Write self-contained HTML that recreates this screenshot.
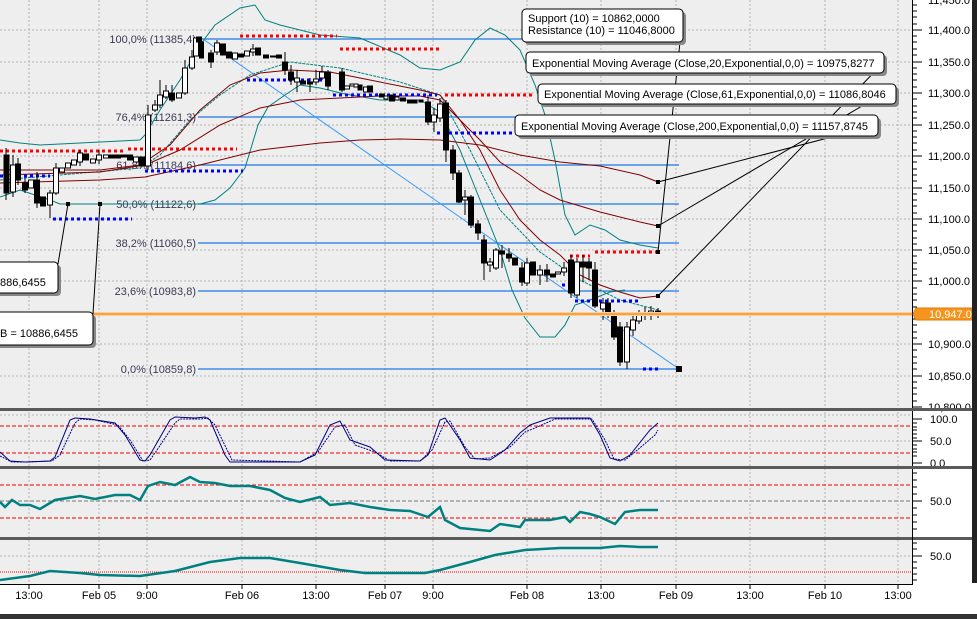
<!DOCTYPE html>
<html><head><meta charset="utf-8"><style>
html,body{margin:0;padding:0;background:#fff;}
svg{display:block;font-family:"Liberation Sans",sans-serif;}
</style></head><body>
<svg width="977" height="619" viewBox="0 0 977 619" xmlns="http://www.w3.org/2000/svg">
<rect x="0" y="0" width="977" height="619" fill="#fff"/>
<rect x="0" y="0" width="912" height="584" fill="#eeeeee"/>
<!-- horizontal grid main -->
<g stroke="#b4b4b4" stroke-dasharray="2 2" stroke-width="1">
<line x1="0" y1="30" x2="912" y2="30"/><line x1="0" y1="62" x2="912" y2="62"/><line x1="0" y1="93" x2="912" y2="93"/>
<line x1="0" y1="125" x2="912" y2="125"/><line x1="0" y1="156" x2="912" y2="156"/><line x1="0" y1="188" x2="912" y2="188"/>
<line x1="0" y1="219" x2="912" y2="219"/><line x1="0" y1="250" x2="912" y2="250"/><line x1="0" y1="281" x2="912" y2="281"/>
<line x1="0" y1="313" x2="912" y2="313"/><line x1="0" y1="344" x2="912" y2="344"/><line x1="0" y1="376" x2="912" y2="376"/>
<line x1="0" y1="415" x2="912" y2="415"/><line x1="0" y1="441" x2="912" y2="441"/>
<line x1="0" y1="556" x2="912" y2="556"/>
<line x1="29" y1="0" x2="29" y2="584"/><line x1="99" y1="0" x2="99" y2="584"/><line x1="147" y1="0" x2="147" y2="584"/>
<line x1="242" y1="0" x2="242" y2="584"/><line x1="316" y1="0" x2="316" y2="584"/><line x1="385" y1="0" x2="385" y2="584"/>
<line x1="433" y1="0" x2="433" y2="584"/><line x1="527" y1="0" x2="527" y2="584"/><line x1="601" y1="0" x2="601" y2="584"/>
<line x1="676" y1="0" x2="676" y2="584"/><line x1="750" y1="0" x2="750" y2="584"/><line x1="825" y1="0" x2="825" y2="584"/>
<line x1="898" y1="0" x2="898" y2="584"/>
</g>
<g stroke="#777" stroke-dasharray="4 2"><line x1="0" y1="501" x2="912" y2="501"/></g>
<g stroke="#e00" stroke-dasharray="4 2" stroke-width="1">
<line x1="0" y1="426" x2="912" y2="426"/><line x1="0" y1="453" x2="912" y2="453"/>
<line x1="0" y1="485" x2="912" y2="485"/><line x1="0" y1="518" x2="912" y2="518"/>
</g>
<g stroke="#e00" stroke-dasharray="1 1"><line x1="0" y1="572" x2="912" y2="572"/></g>

<!-- fib lines -->
<g stroke="#1e78e6" stroke-width="1.2">
<line x1="198" y1="39" x2="679" y2="39"/><line x1="198" y1="117" x2="679" y2="117"/>
<line x1="198" y1="165" x2="679" y2="165"/><line x1="198" y1="204" x2="679" y2="204"/>
<line x1="198" y1="243" x2="679" y2="243"/><line x1="198" y1="291" x2="679" y2="291"/>
<line x1="198" y1="369" x2="679" y2="369"/>
</g>
<g font-size="11" fill="#3a3a55" text-anchor="end">
<text x="196" y="43">100,0% (11385,4)</text><text x="196" y="121">76,4% (11261,3)</text>
<text x="196" y="169">61,8% (11184,6)</text><text x="196" y="208">50,0% (11122,6)</text>
<text x="196" y="247">38,2% (11060,5)</text><text x="196" y="295">23,6% (10983,8)</text>
<text x="196" y="373">0,0% (10859,8)</text>
</g>
<line x1="200" y1="37" x2="679" y2="369" stroke="#3399ff" stroke-width="1"/>

<!-- bollinger -->
<g fill="none" stroke="#008080" stroke-width="1">
<polyline points="0,140 20,143 40,145 140,140 145,135 160,110 180,80 200,45 215,25 240,8 255,5 265,20 280,25 320,35 360,38 400,55 420,68 440,70 460,62 475,40 490,28 505,35 520,50 535,85 545,115 555,160 565,215 575,235 590,225 605,230 620,240 640,245 658,248"/>
<polyline points="0,197 20,190 50,200 60,204 140,204 200,204 215,200 230,188 245,168 258,125 268,107 285,95 300,85 320,88 345,94 380,100 420,100 440,112 460,150 480,200 500,250 512,290 525,318 540,337 555,337 565,325 575,305 590,300 610,292 625,290"/>
<polyline stroke-dasharray="3 1" points="0,180 60,175 140,168 160,155 190,120 220,95 250,75 290,62 340,68 400,82 440,95 470,150 500,210 540,252 580,280 620,300 658,310"/>
</g>
<!-- EMAs -->
<g fill="none" stroke="#800000" stroke-width="1">
<polyline points="0,170 100,170 140,165 170,145 200,110 230,85 260,73 290,70 330,72 380,82 420,90 440,95 460,120 480,150 500,190 520,220 540,240 560,255 580,275 600,285 620,292 640,298 658,296"/>
<polyline points="0,175 100,172 145,165 180,150 220,125 260,108 300,100 340,98 380,96 420,96 440,100 460,120 480,140 500,162 520,175 540,190 560,200 600,212 640,222 658,226"/>
<polyline points="0,183 100,180 145,177 200,165 260,150 320,143 360,140 400,139 440,140 480,145 520,155 560,162 600,166 640,175 658,182"/>
</g>

<!-- dotted support/resistance -->
<g stroke="#ff0000" stroke-width="3" stroke-dasharray="3 3" fill="none">
<line x1="0" y1="151" x2="125" y2="151"/><line x1="128" y1="149" x2="237" y2="149"/>
<line x1="240" y1="36" x2="337" y2="36"/><line x1="340" y1="49" x2="440" y2="49"/>
<line x1="445" y1="95" x2="535" y2="95"/><line x1="570" y1="256" x2="590" y2="256"/>
<line x1="595" y1="252" x2="658" y2="252"/>
</g>
<g stroke="#0000ff" stroke-width="3" stroke-dasharray="3 3" fill="none">
<line x1="0" y1="176" x2="50" y2="176"/><line x1="53" y1="219" x2="132" y2="219"/>
<line x1="145" y1="171" x2="243" y2="171"/><line x1="247" y1="80" x2="322" y2="80"/>
<line x1="333" y1="95" x2="437" y2="95"/><line x1="437" y1="133" x2="517" y2="133"/>
<line x1="562" y1="285" x2="572" y2="285"/><line x1="575" y1="301" x2="640" y2="301"/>
<line x1="643" y1="369" x2="660" y2="369"/>
</g>

<!-- candles -->
<g stroke="#000" stroke-width="1">
<line x1="6" y1="148" x2="6" y2="200"/><rect x="4" y="155" width="5" height="38" fill="#000"/>
<line x1="13" y1="155" x2="13" y2="197"/><rect x="10.5" y="165" width="5" height="27" fill="#fff"/>
<line x1="18" y1="158" x2="18" y2="185"/><rect x="15.5" y="164" width="5" height="16" fill="#000"/>
<line x1="25" y1="178" x2="25" y2="193"/><rect x="22.5" y="183" width="5" height="7" fill="#000"/>
<rect x="28.5" y="180" width="5" height="8" fill="#fff"/>
<line x1="37" y1="172" x2="37" y2="208"/><rect x="34.5" y="180" width="5" height="23" fill="#000"/>
<rect x="40.5" y="197" width="5" height="9" fill="#000"/>
<line x1="50" y1="190" x2="50" y2="218"/><rect x="47.5" y="193" width="5" height="12" fill="#fff"/>
<line x1="56" y1="163" x2="56" y2="195"/><rect x="53.5" y="168" width="5" height="25" fill="#fff"/>
<rect x="59.5" y="168" width="5" height="4" fill="#fff"/><rect x="65.5" y="163" width="5" height="5" fill="#fff"/>
<rect x="71.5" y="160" width="5" height="5" fill="#fff"/><line x1="80" y1="150" x2="80" y2="166"/><rect x="77.5" y="153" width="5" height="9" fill="#fff"/>
<rect x="83.5" y="154" width="5" height="6" fill="#000"/><rect x="90.5" y="159" width="5" height="4" fill="#fff"/>
<line x1="99" y1="150" x2="99" y2="164"/><rect x="96.5" y="155" width="5" height="5" fill="#fff"/>
<rect x="103.5" y="155" width="5" height="3" fill="#fff"/><rect x="109.5" y="155" width="5" height="3" fill="#000"/>
<rect x="115.5" y="155" width="5" height="3" fill="#000"/><rect x="121.5" y="155" width="5" height="2" fill="#000"/>
<rect x="127.5" y="155" width="5" height="5" fill="#000"/><rect x="133.5" y="157" width="5" height="5" fill="#fff"/>
<rect x="139.5" y="157" width="5" height="9" fill="#000"/>
<line x1="148" y1="105" x2="148" y2="170"/><rect x="145.5" y="115" width="5" height="51" fill="#fff"/>
<line x1="155" y1="100" x2="155" y2="112"/><rect x="152.5" y="105" width="5" height="5" fill="#fff"/>
<line x1="160" y1="80" x2="160" y2="108"/><rect x="157.5" y="95" width="5" height="10" fill="#fff"/>
<line x1="166" y1="85" x2="166" y2="99"/><rect x="163.5" y="91" width="5" height="6" fill="#fff"/>
<line x1="172" y1="85" x2="172" y2="102"/><rect x="169.5" y="93" width="5" height="7" fill="#000"/>
<rect x="176.5" y="93" width="5" height="5" fill="#fff"/>
<line x1="185" y1="60" x2="185" y2="95"/><rect x="182.5" y="68" width="5" height="25" fill="#fff"/>
<line x1="192" y1="50" x2="192" y2="70"/><rect x="189.5" y="57" width="5" height="11" fill="#fff"/>
<rect x="193.5" y="38" width="5" height="18" fill="#fff"/><rect x="196.5" y="37" width="5" height="5" fill="#000"/>
<rect x="199.5" y="42" width="4" height="16" fill="#000"/>
<line x1="211" y1="50" x2="211" y2="68"/><rect x="208.5" y="53" width="5" height="9" fill="#000"/>
<line x1="217" y1="40" x2="217" y2="55"/><rect x="214.5" y="43" width="5" height="9" fill="#fff"/>
<rect x="220.5" y="44" width="5" height="11" fill="#000"/><rect x="226.5" y="52" width="5" height="6" fill="#000"/>
<rect x="232.5" y="53" width="5" height="6" fill="#fff"/><rect x="238.5" y="54" width="5" height="3" fill="#000"/>
<rect x="244.5" y="51" width="5" height="5" fill="#fff"/><line x1="253" y1="44" x2="253" y2="56"/><rect x="250.5" y="49" width="5" height="3" fill="#fff"/>
<rect x="255.5" y="48" width="5" height="7" fill="#000"/><rect x="263.5" y="55" width="5" height="3" fill="#000"/>
<rect x="270.5" y="56" width="5" height="1" fill="#000"/><rect x="276.5" y="55" width="5" height="3" fill="#000"/>
<line x1="285" y1="52" x2="285" y2="75"/><rect x="282.5" y="62" width="5" height="8" fill="#000"/>
<line x1="291" y1="65" x2="291" y2="85"/><rect x="288.5" y="72" width="5" height="8" fill="#000"/>
<line x1="297" y1="70" x2="297" y2="92"/><rect x="294.5" y="78" width="5" height="4" fill="#fff"/>
<rect x="300.5" y="81" width="5" height="3" fill="#000"/><line x1="310" y1="78" x2="310" y2="92"/><rect x="307.5" y="82" width="5" height="2" fill="#000"/>
<line x1="316" y1="70" x2="316" y2="85"/><rect x="313.5" y="79" width="5" height="3" fill="#fff"/>
<line x1="322" y1="66" x2="322" y2="80"/><rect x="319.5" y="72" width="5" height="6" fill="#fff"/>
<line x1="328" y1="70" x2="328" y2="90"/><rect x="325.5" y="72" width="5" height="14" fill="#000"/>
<line x1="342" y1="68" x2="342" y2="92"/><rect x="339.5" y="72" width="5" height="18" fill="#000"/>
<rect x="344.5" y="86" width="5" height="3" fill="#fff"/><rect x="350" y="84" width="4" height="2" fill="#fff"/>
<rect x="354" y="84" width="4" height="3" fill="#fff"/><rect x="358" y="85" width="4" height="5" fill="#000"/>
<rect x="363.5" y="87" width="5" height="5" fill="#fff"/><rect x="367.5" y="86" width="5" height="6" fill="#000"/>
<rect x="379.5" y="94" width="5" height="3" fill="#000"/><rect x="384" y="96" width="4" height="3" fill="#fff"/>
<rect x="389.5" y="95" width="5" height="6" fill="#000"/><rect x="395" y="97" width="4" height="3" fill="#fff"/>
<rect x="400.5" y="98" width="5" height="3" fill="#000"/><rect x="407.5" y="100" width="5" height="3" fill="#000"/>
<rect x="413" y="100" width="4" height="3" fill="#000"/><rect x="419" y="100" width="4" height="2" fill="#000"/>
<line x1="428" y1="95" x2="428" y2="125"/><rect x="425.5" y="102" width="5" height="20" fill="#000"/>
<line x1="434" y1="108" x2="434" y2="132"/><rect x="431.5" y="115" width="5" height="7" fill="#fff"/>
<line x1="440" y1="98" x2="440" y2="122"/><rect x="437.5" y="104" width="5" height="14" fill="#fff"/>
<line x1="446" y1="100" x2="446" y2="162"/><rect x="443.5" y="103" width="5" height="47" fill="#000"/>
<line x1="453" y1="145" x2="453" y2="180"/><rect x="450.5" y="150" width="5" height="23" fill="#000"/>
<line x1="459" y1="170" x2="459" y2="203"/><rect x="456.5" y="173" width="5" height="29" fill="#000"/>
<line x1="465" y1="190" x2="465" y2="215"/><rect x="462.5" y="197" width="5" height="3" fill="#fff"/>
<line x1="471" y1="195" x2="471" y2="228"/><rect x="468.5" y="197" width="5" height="28" fill="#000"/>
<line x1="478" y1="220" x2="478" y2="240"/><rect x="475.5" y="224" width="5" height="9" fill="#000"/>
<line x1="484" y1="235" x2="484" y2="280"/><rect x="481.5" y="240" width="5" height="23" fill="#000"/>
<line x1="490" y1="258" x2="490" y2="272"/><rect x="487.5" y="262" width="5" height="3" fill="#fff"/>
<line x1="496" y1="248" x2="496" y2="270"/><rect x="493.5" y="250" width="5" height="18" fill="#fff"/>
<line x1="502" y1="245" x2="502" y2="268"/><rect x="499.5" y="251" width="5" height="3" fill="#000"/>
<line x1="509" y1="248" x2="509" y2="262"/><rect x="506.5" y="254" width="5" height="4" fill="#000"/>
<rect x="512.5" y="258" width="5" height="7" fill="#000"/>
<line x1="522" y1="262" x2="522" y2="286"/><rect x="519.5" y="268" width="5" height="14" fill="#000"/>
<line x1="527" y1="258" x2="527" y2="286"/><rect x="524.5" y="263" width="5" height="20" fill="#fff"/>
<rect x="530.5" y="262" width="5" height="13" fill="#000"/>
<line x1="540" y1="265" x2="540" y2="285"/><rect x="537.5" y="270" width="5" height="5" fill="#fff"/>
<line x1="547" y1="264" x2="547" y2="282"/><rect x="544.5" y="270" width="5" height="5" fill="#000"/>
<rect x="550.5" y="274" width="5" height="3" fill="#000"/><rect x="555.5" y="272" width="5" height="2" fill="#fff"/>
<line x1="564" y1="262" x2="564" y2="276"/><rect x="561.5" y="268" width="5" height="4" fill="#fff"/>
<line x1="571" y1="255" x2="571" y2="298"/><rect x="568.5" y="260" width="5" height="33" fill="#000"/>
<line x1="577" y1="258" x2="577" y2="298"/><rect x="574.5" y="262" width="5" height="33" fill="#fff"/>
<line x1="583" y1="255" x2="583" y2="282"/><rect x="580.5" y="262" width="5" height="5" fill="#000"/>
<line x1="589" y1="258" x2="589" y2="280"/><rect x="586.5" y="262" width="5" height="6" fill="#000"/>
<line x1="595" y1="262" x2="595" y2="308"/><rect x="592.5" y="270" width="5" height="36" fill="#000"/>
<line x1="603" y1="298" x2="603" y2="320"/><rect x="600.5" y="303" width="5" height="6" fill="#fff"/>
<line x1="608" y1="298" x2="608" y2="318"/><rect x="605.5" y="303" width="5" height="10" fill="#000"/>
<line x1="614" y1="310" x2="614" y2="340"/><rect x="611.5" y="313" width="5" height="24" fill="#000"/>
<line x1="620" y1="322" x2="620" y2="366"/><rect x="617.5" y="327" width="5" height="35" fill="#000"/>
<line x1="627" y1="322" x2="627" y2="369"/><rect x="624.5" y="327" width="5" height="35" fill="#fff"/>
<line x1="633" y1="316" x2="633" y2="336"/><rect x="630.5" y="320" width="5" height="10" fill="#fff"/>
<line x1="639" y1="310" x2="639" y2="324"/><rect x="636.5" y="315" width="5" height="6" fill="#fff"/>
<line x1="645" y1="307" x2="645" y2="320"/><rect x="642.5" y="313" width="5" height="2" fill="#fff"/>
<line x1="651" y1="306" x2="651" y2="320"/><rect x="648.5" y="311" width="5" height="2" fill="#fff"/>
<line x1="658" y1="308" x2="658" y2="318"/><rect x="655.5" y="311" width="5" height="3" fill="#000"/>
</g>

<!-- orange price line -->
<line x1="0" y1="314" x2="912" y2="314" stroke="#fbd0a0" stroke-width="4"/>
<line x1="0" y1="314" x2="912" y2="314" stroke="#f7941d" stroke-width="1.5"/>

<rect x="676" y="366" width="6" height="6" fill="#000"/>

<!-- connector lines -->
<g stroke="#000" stroke-width="1" fill="none">
<line x1="680" y1="42" x2="658" y2="252"/>
<line x1="884" y1="62" x2="658" y2="296"/>
<line x1="896" y1="86" x2="658" y2="226"/>
<line x1="878" y1="125" x2="658" y2="182"/>
<line x1="68" y1="204" x2="58" y2="264"/>
<line x1="100" y1="204" x2="93" y2="314"/>
</g>
<g fill="#000">
<rect x="656" y="180" width="4" height="4"/><rect x="656" y="224" width="4" height="4"/>
<rect x="656" y="250" width="4" height="4"/><rect x="656" y="294" width="4" height="4"/>
<rect x="66" y="202" width="4" height="4"/><rect x="98" y="202" width="4" height="4"/>
</g>

<!-- callout boxes -->
<g font-size="11" fill="#000">
<rect x="525" y="12" width="161" height="33" rx="4" fill="#888"/>
<rect x="522" y="9" width="161" height="33" rx="4" fill="#fff" stroke="#000"/>
<text x="528" y="22">Support (10) = 10862,0000</text>
<text x="528" y="34">Resistance (10) = 11046,8000</text>
<rect x="529" y="55" width="358" height="21" rx="4" fill="#888"/>
<rect x="526" y="52" width="358" height="21" rx="4" fill="#fff" stroke="#000"/>
<text x="532" y="67">Exponential Moving Average (Close,20,Exponential,0,0) = 10975,8277</text>
<rect x="541" y="87" width="358" height="20" rx="4" fill="#888"/>
<rect x="538" y="84" width="358" height="20" rx="4" fill="#fff" stroke="#000"/>
<text x="544" y="98">Exponential Moving Average (Close,61,Exponential,0,0) = 11086,8046</text>
<rect x="518" y="118" width="363" height="21" rx="4" fill="#888"/>
<rect x="515" y="115" width="363" height="21" rx="4" fill="#fff" stroke="#000"/>
<text x="521" y="130">Exponential Moving Average (Close,200,Exponential,0,0) = 11157,8745</text>
<rect x="-5" y="265" width="66" height="31" rx="4" fill="#888"/>
<rect x="-5" y="262" width="63" height="31" rx="4" fill="#fff" stroke="#000"/>
<text x="0" y="286">886,6455</text>
<rect x="-5" y="315" width="101" height="33" rx="4" fill="#888"/>
<rect x="-5" y="312" width="98" height="33" rx="4" fill="#fff" stroke="#000"/>
<text x="0" y="337">B = 10886,6455</text>
</g>

<!-- stochastic -->
<g fill="none" stroke="#000080" stroke-width="1">
<polyline points="0,452 10,461 25,462 50,461 55,457 70,420 75,418 90,419 115,423 125,435 140,460 145,461 150,455 170,420 175,417 195,418 205,417 210,420 225,455 230,462 300,462 315,455 330,425 340,421 350,440 370,447 385,460 420,461 428,455 440,420 445,418 460,440 470,458 490,460 505,450 520,433 530,425 550,418 590,418 600,435 610,458 620,461 630,455 650,430 658,423"/>
<polyline stroke-dasharray="2 1" points="0,456 12,462 28,462 52,461 60,455 75,423 80,419 95,420 118,425 130,440 143,461 150,460 157,450 175,423 180,419 200,419 208,418 215,425 232,460 300,462 318,452 335,427 345,425 355,445 375,452 390,461 420,461 432,450 445,422 450,421 465,447 475,459 490,458 510,447 525,432 535,428 555,419 592,419 605,440 614,459 625,460 635,452 655,435 658,430"/>
</g>
<!-- RSI-like -->
<polyline fill="none" stroke="#008080" stroke-width="2.5" points="0,502 5,507 12,500 20,505 30,505 40,509 55,500 80,496 95,499 115,495 130,495 140,500 148,486 160,482 175,485 190,477 200,482 215,483 230,486 250,486 270,490 285,498 300,502 320,497 330,505 350,503 370,507 390,510 410,511 428,517 440,507 445,520 460,528 490,531 500,524 520,527 525,520 550,520 565,517 570,522 580,512 590,514 600,517 615,524 625,512 640,510 658,510"/>
<polyline fill="none" stroke="#008080" stroke-width="2.5" points="0,580 30,576 50,571 80,573 100,575 140,576 175,571 210,562 240,558 270,558 300,563 340,570 365,573 425,573 440,570 470,562 495,555 525,550 560,548 600,548 620,546 640,547 658,547"/>

<!-- separators -->
<rect x="0" y="408" width="977" height="3" fill="#5a5a5a"/>
<rect x="0" y="466" width="977" height="3" fill="#5a5a5a"/>
<rect x="0" y="537" width="977" height="3" fill="#5a5a5a"/>

<!-- axes -->
<line x1="912.5" y1="0" x2="912.5" y2="584" stroke="#000"/>
<line x1="0" y1="584.5" x2="913" y2="584.5" stroke="#000"/>
<g stroke="#000">
<path d="M912 5h5M912 11h5M912 17h5M912 24h5M912 30h10M912 36h5M912 42h5M912 49h5M912 55h5M912 62h10M912 68h5M912 74h5M912 80h5M912 87h5M912 93h10M912 99h5M912 106h5M912 112h5M912 118h5M912 125h10M912 131h5M912 137h5M912 143h5M912 150h5M912 156h10M912 162h5M912 169h5M912 175h5M912 181h5M912 188h10M912 194h5M912 200h5M912 206h5M912 213h5M912 219h10M912 225h5M912 231h5M912 238h5M912 244h5M912 250h10M912 256h5M912 263h5M912 269h5M912 275h5M912 281h10M912 288h5M912 294h5M912 300h5M912 307h5M912 319h5M912 325h5M912 332h5M912 338h5M912 344h10M912 350h5M912 357h5M912 363h5M912 369h5M912 376h10M912 382h5M912 388h5M912 394h5M912 401h5M912 407h10"/>
<path d="M912 419h10M912 423h5M912 427h5M912 430h5M912 434h5M912 438h5M912 441h10M912 445h5M912 449h5M912 452h5M912 456h5M912 463h10"/>
<path d="M912 473h5M912 480h5M912 487h5M912 494h5M912 501h10M912 508h5M912 515h5M912 522h5M912 529h5"/>
<path d="M912 543h5M912 549h5M912 556h10M912 562h5M912 568h5M912 574h5M912 580h5"/>
<path d="M29 584v5M99 584v5M147 584v5M242 584v5M316 584v5M385 584v5M433 584v5M527 584v5M601 584v5M676 584v5M750 584v5M825 584v5M898 584v5"/>
</g>
<g font-size="11" fill="#000">
<text x="928" y="4">11,450.0</text>
<text x="928" y="34">11,400.0</text><text x="928" y="66">11,350.0</text><text x="928" y="97">11,300.0</text>
<text x="928" y="129">11,250.0</text><text x="928" y="160">11,200.0</text><text x="928" y="192">11,150.0</text>
<text x="928" y="223">11,100.0</text><text x="928" y="254">11,050.0</text><text x="928" y="285">11,000.0</text>
<text x="928" y="348">10,900.0</text><text x="928" y="380">10,850.0</text><text x="928" y="411">10,800.0</text>
<text x="930" y="423">100.0</text><text x="930" y="445">50.0</text><text x="930" y="467">0.0</text>
<text x="930" y="505">50.0</text><text x="930" y="560">50.0</text>
</g>
<rect x="0" y="408" width="977" height="3" fill="#5a5a5a"/>
<rect x="0" y="466" width="977" height="3" fill="#5a5a5a"/>
<path d="M916 308h56v12h-56l-3-6z" fill="#f7941d" stroke="#e07b00"/>
<text x="929" y="318" font-size="11" fill="#fff">10,947.0</text>
<g font-size="11" fill="#000" text-anchor="middle">
<text x="29" y="599">13:00</text><text x="99" y="599">Feb 05</text><text x="147" y="599">9:00</text>
<text x="242" y="599">Feb 06</text><text x="316" y="599">13:00</text><text x="385" y="599">Feb 07</text>
<text x="433" y="599">9:00</text><text x="527" y="599">Feb 08</text><text x="601" y="599">13:00</text>
<text x="676" y="599">Feb 09</text><text x="750" y="599">13:00</text><text x="825" y="599">Feb 10</text>
<text x="898" y="599">13:00</text>
</g>
<rect x="972" y="0" width="5" height="583" fill="#222"/>
<rect x="0" y="614" width="977" height="5" fill="#333"/>
</svg>
</body></html>
